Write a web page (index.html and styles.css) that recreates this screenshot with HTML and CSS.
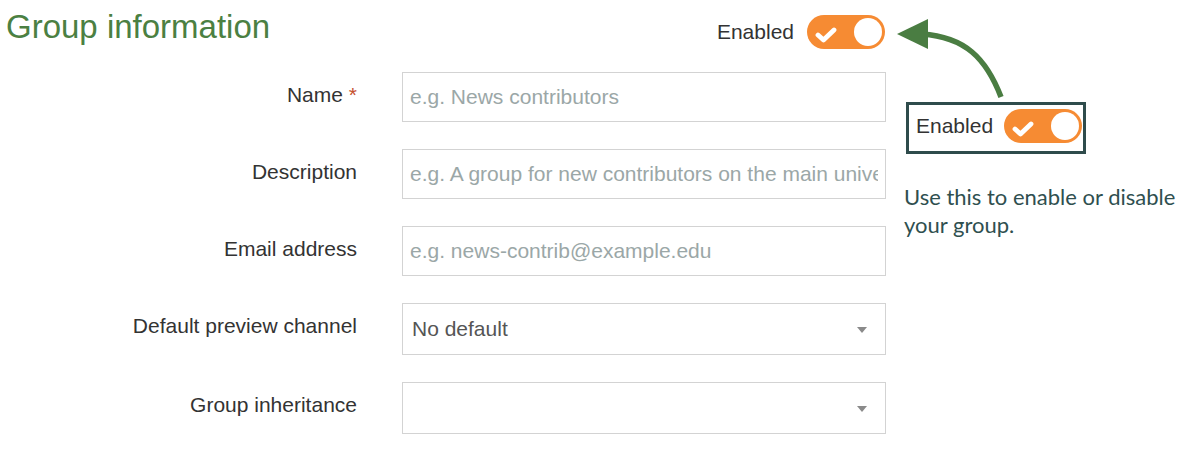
FILE: index.html
```html
<!DOCTYPE html>
<html lang="en">
<head>
<meta charset="utf-8">
<title>Group information</title>
<link rel="stylesheet" href="styles.css">
</head>
<body>
<div class="page">
  <div class="main">
    <div class="header">
      <h1 class="title">Group information</h1>
      <div class="switch-group">
        <span class="switch-label">Enabled</span>
        <span class="toggle">
          <svg class="check" width="22" height="16" viewBox="0 0 22 16"><path d="M3 8 L8.5 13 L19 3" fill="none" stroke="#fff" stroke-width="4.8" stroke-linecap="round" stroke-linejoin="round"/></svg>
          <span class="knob"></span>
        </span>
      </div>
    </div>
    <div class="form">
      <label class="label">Name <span class="req">*</span></label>
      <input class="field" type="text" placeholder="e.g. News contributors">

      <label class="label">Description</label>
      <input class="field" type="text" placeholder="e.g. A group for new contributors on the main university website">

      <label class="label">Email address</label>
      <input class="field" type="text" placeholder="e.g. news-contrib@example.edu">

      <label class="label">Default preview channel</label>
      <div class="select"><span class="select-value">No default</span><span class="caret"></span></div>

      <label class="label">Group inheritance</label>
      <div class="select"><span class="select-value"></span><span class="caret"></span></div>
    </div>
  </div>
  <div class="aside">
    <div class="callout">
      <span class="switch-label">Enabled</span>
      <span class="toggle">
        <svg class="check" width="22" height="16" viewBox="0 0 22 16"><path d="M3 8 L8.5 13 L19 3" fill="none" stroke="#fff" stroke-width="4.8" stroke-linecap="round" stroke-linejoin="round"/></svg>
        <span class="knob"></span>
      </span>
    </div>
    <p class="help">Use this to enable or disable your group.</p>
  </div>
  <svg class="arrow" width="1188" height="464" viewBox="0 0 1188 464">
    <path d="M1001 97 C 986 58 965 37 922 34" fill="none" stroke="#4a7d42" stroke-width="5.5"/>
    <polygon points="897,34 928,19 928,49" fill="#4a7d42"/>
  </svg>
</div>
</body>
</html>
```

FILE: styles.css
```css
* { box-sizing: border-box; }

html, body {
  margin: 0;
  padding: 0;
  background: #ffffff;
}

body {
  font-family: "Liberation Sans", Arial, sans-serif;
  color: #333333;
  width: 1188px;
  height: 464px;
  overflow: hidden;
}

.page {
  position: relative;
  display: flex;
  width: 1188px;
  height: 464px;
}

.main {
  width: 886px;
  flex: none;
}

.header {
  display: flex;
  justify-content: space-between;
  align-items: flex-start;
  height: 72px;
  padding-right: 1px;
}

.title {
  margin: 7px 0 0 6px;
  font-size: 33px;
  line-height: 40px;
  font-weight: normal;
  color: #4b8042;
}

.switch-group {
  display: flex;
  align-items: center;
  gap: 13px;
  margin-top: 15px;
}

.switch-label {
  font-size: 21px;
  line-height: 24px;
  color: #333333;
}

.toggle {
  position: relative;
  display: block;
  width: 78px;
  height: 34px;
  border-radius: 17px;
  background: #f68b33;
}

.check {
  position: absolute;
  left: 8px;
  top: 12px;
}

.knob {
  position: absolute;
  right: 3px;
  top: 3px;
  width: 28px;
  height: 28px;
  border-radius: 50%;
  background: #ffffff;
}

.form {
  display: grid;
  grid-template-columns: 357px 484px;
  column-gap: 45px;
  row-gap: 27px;
}

.label {
  font-size: 21px;
  line-height: 24px;
  text-align: right;
  color: #333333;
  padding-top: 11px;
}

.req {
  color: #c5502f;
}

.field {
  display: block;
  width: 484px;
  height: 50px;
  margin: 0;
  border: 1px solid #d3d3d3;
  border-radius: 0;
  padding: 0 7px;
  font-family: "Liberation Sans", Arial, sans-serif;
  font-size: 21px;
  color: #333333;
  background: #ffffff;
  outline: none;
}

.field::placeholder {
  color: #9ba7a7;
  opacity: 1;
}

.select {
  display: flex;
  align-items: center;
  justify-content: space-between;
  width: 484px;
  height: 52px;
  border: 1px solid #d3d3d3;
  padding: 0 18px 0 9px;
  background: #ffffff;
}

.select-value {
  font-size: 21px;
  line-height: 24px;
  color: #555555;
}

.caret {
  display: block;
  width: 0;
  height: 0;
  border-left: 5px solid transparent;
  border-right: 5px solid transparent;
  border-top: 6px solid #8a8a8a;
  margin-top: 2px;
}

.aside {
  flex: 1;
  padding-top: 102px;
  padding-left: 20px;
}

.callout {
  display: flex;
  align-items: center;
  justify-content: space-between;
  width: 180px;
  height: 52px;
  border: 3px solid #2f4c4c;
  padding: 1px 1px 5px 7px;
}

.help {
  margin: 29px 0 0 -2px;
  font-family: Lato, "Open Sans", sans-serif;
  font-size: 22px;
  line-height: 28px;
  color: #2f4f4f;
}

.arrow {
  position: absolute;
  left: 0;
  top: 0;
  pointer-events: none;
}
```
